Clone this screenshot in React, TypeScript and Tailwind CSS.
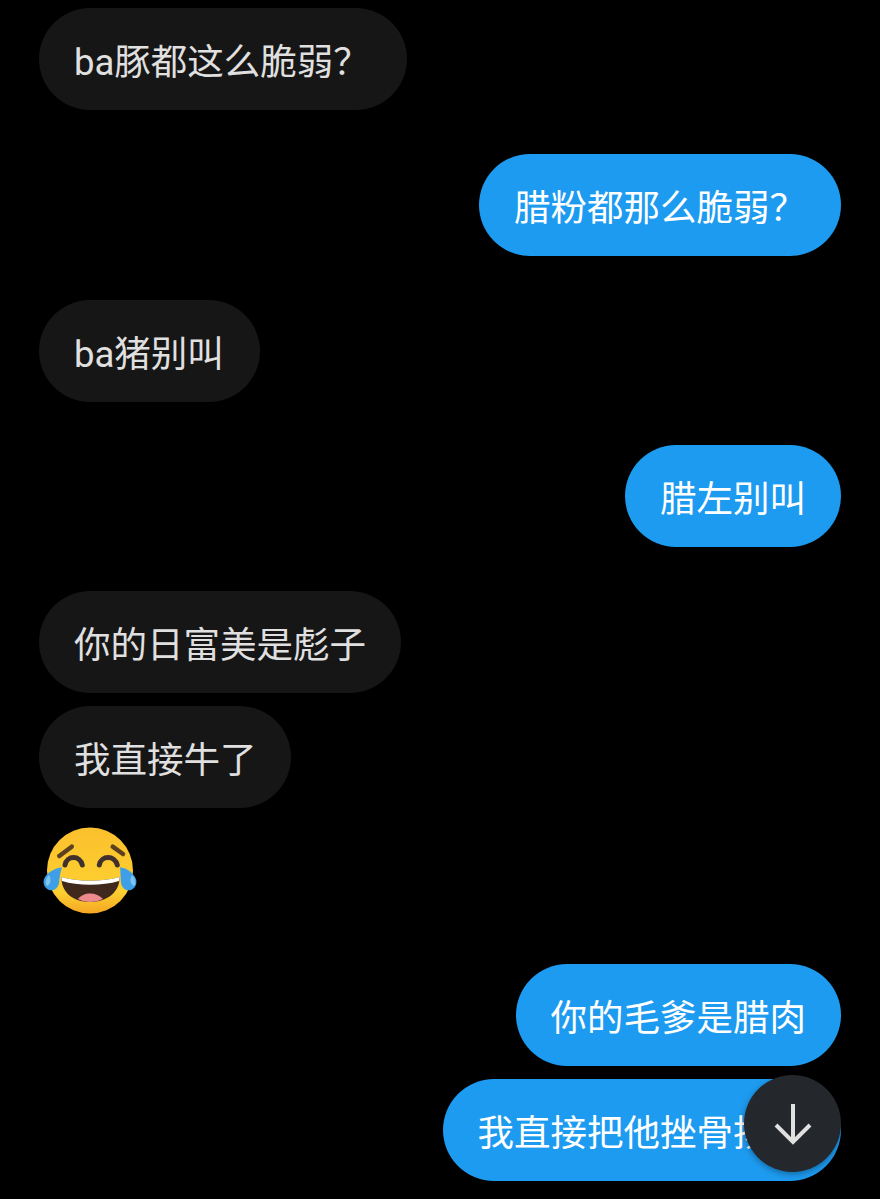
function Bubble({ text, mine = false, className = "" }: { text: string; mine?: boolean; className?: string }) {
  return (
    <div
      className={`h-[102px] shrink-0 flex items-center rounded-[51px] pl-[35px] pt-[8px] text-[36.5px] leading-none whitespace-nowrap ${
        mine ? "self-end bg-[#1d9bf0] text-white" : "self-start bg-[#161616] text-[#e0e0e0]"
      } ${className}`}
    >
      {text}
    </div>
  );
}

function LaughEmoji() {
  return (
    <svg viewBox="0 0 100 92" className="w-[100px] h-[92px] ml-[1px]">
      <defs>
        <linearGradient id="face" x1="0" y1="0" x2="0" y2="1">
          <stop offset="0" stopColor="#fbc02d" />
          <stop offset="0.75" stopColor="#fdd031" />
          <stop offset="1" stopColor="#f5a623" />
        </linearGradient>
      </defs>
      <circle cx="50" cy="45.500" r="43" fill="url(#face)" />
      {/* brows */}
      <path d="M19.300 31 L31.700 21.700" stroke="#5d4020" strokeWidth="4.500" strokeLinecap="round" fill="none" />
      <path d="M83 29 L72.700 21.700" stroke="#5d4020" strokeWidth="4.500" strokeLinecap="round" fill="none" />
      {/* eyes */}
      <path d="M25 40 C27 30 40 30 42.300 40" stroke="#40312c" strokeWidth="5" strokeLinecap="round" fill="none" />
      <path d="M59.300 40 C61 30 75 30 77.300 40" stroke="#40312c" strokeWidth="5" strokeLinecap="round" fill="none" />
      {/* mouth */}
      <path d="M21.500 52 C38 57 62 57 79.500 52 C80 67 67 77 50 77 C33 77 21 67 21.500 52 Z" fill="#40291c" />
      <path d="M21.500 52 C38 57 62 57 79.500 52 C79.500 53.500 79.300 55 79 56 C62 61 38 61 22 56 C21.700 55 21.500 53.500 21.500 52 Z" fill="#fff" />
      <path d="M38 74 C43 66.500 57 66.500 63 74 C59 76 54.500 77 50 77 C45.500 77 41.500 76 38 74 Z" fill="#ed8a8d" />
      {/* tears */}
      <path d="M22 42.300 C16 43 8 47 5 52 C2 57 4 63 9 65 C14 66.500 18 63 19 58 C19.500 52 20.500 47 22 42.300 Z" fill="#3f9fe6" />
      <path d="M80 42.300 C86 43 92 47 95 52 C98 57 96 63 91 65 C86 66.500 82 63 81 58 C80.500 52 80.500 47 80 42.300 Z" fill="#3f9fe6" />
      <path d="M9 50 C6 53 4.500 58 7 61 C10 60 12 55 9 50 Z" fill="#7fc4ef" />
      <path d="M92 50 C95 53 96.500 58 94 61 C91 60 89 55 92 50 Z" fill="#7fc4ef" />
    </svg>
  );
}

export default function App() {
  return (
    <div className="relative w-[880px] h-[1199px] overflow-hidden bg-black font-['Roboto','Noto_Sans_CJK_SC',sans-serif]">
      <div className="flex flex-col pt-[8px] pl-[39px] pr-[39px]">
        <Bubble text="ba豚都这么脆弱？" className="pr-[37px]" />
        <Bubble text="腊粉都那么脆弱？" mine className="mt-[44px] pr-[35px]" />
        <Bubble text="ba猪别叫" className="mt-[44px] pr-[36px]" />
        <Bubble text="腊左别叫" mine className="mt-[43px] pr-[35px]" />
        <Bubble text="你的日富美是彪子" className="mt-[44px] pr-[35px]" />
        <Bubble text="我直接牛了" className="mt-[13px] pr-[34px]" />
        <div className="mt-[17px] self-start">
          <LaughEmoji />
        </div>
        <Bubble text="你的毛爹是腊肉" mine className="mt-[47px] pr-[35px]" />
        <Bubble text="我直接把他挫骨扬灰" mine className="mt-[13px] pr-[35px]" />
      </div>

      {/* scroll to bottom */}
      <button className="absolute left-[744px] top-[1075px] w-[97px] h-[97px] rounded-full bg-[#24272b] flex items-center justify-center shadow-[0_2px_6px_rgba(0,0,0,0.35)]">
        <svg viewBox="0 0 40 42" className="w-[40px] h-[42px]" fill="none" stroke="#e0e0e0" strokeWidth="4">
          <path d="M20 1 V39" />
          <path d="M3 22 L20 39 L37 22" />
        </svg>
      </button>
    </div>
  );
}
